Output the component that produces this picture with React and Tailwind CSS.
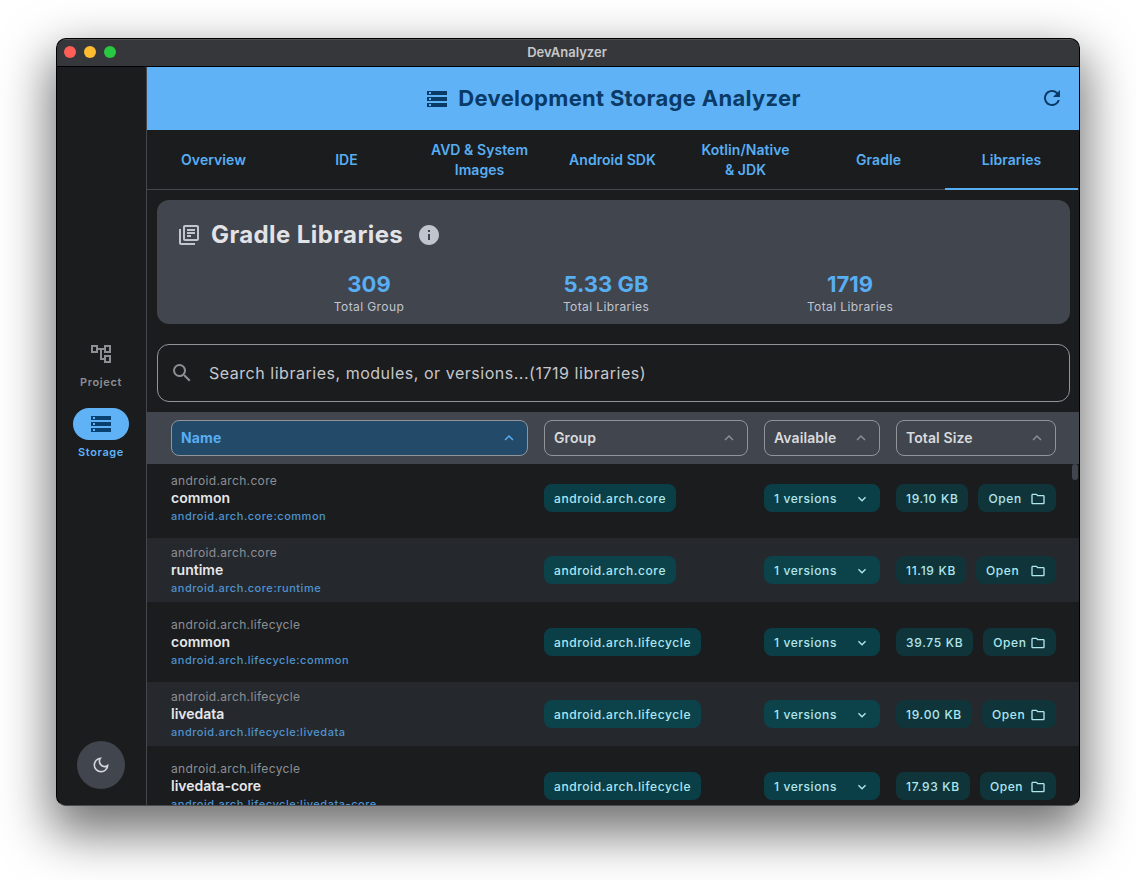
import {
  MdStorage,
  MdOutlineAccountTree,
  MdRefresh,
  MdInfo,
  MdOutlineLibraryBooks,
  MdSearch,
  MdOutlineDarkMode,
  MdOutlineFolder,
  MdKeyboardArrowDown,
  MdKeyboardArrowUp,
} from "react-icons/md";

const tabs = ["Overview", "IDE", "AVD & System Images", "Android SDK", "Kotlin/Native & JDK", "Gradle", "Libraries"];

const stats = [
  { value: "309", label: "Total Group", className: "left-[212px]" },
  { value: "5.33 GB", label: "Total Libraries", className: "left-[449px]" },
  { value: "1719", label: "Total Libraries", className: "left-[693px]" },
];

const rows = [
  { group: "android.arch.core", name: "common", size: "19.10 KB" },
  { group: "android.arch.core", name: "runtime", size: "11.19 KB" },
  { group: "android.arch.lifecycle", name: "common", size: "39.75 KB" },
  { group: "android.arch.lifecycle", name: "livedata", size: "19.00 KB" },
  { group: "android.arch.lifecycle", name: "livedata-core", size: "17.93 KB" },
];

const TitleBar = () => {
  return (
    <div className="relative flex h-[28px] shrink-0 items-center justify-center border-b border-black bg-[#36373b] pr-[2px] shadow-[inset_0_1px_0_rgba(255,255,255,0.14)]">
      <div className="absolute left-[7px] top-[7px] flex gap-2">
        <span className="h-3 w-3 rounded-full bg-[#ff5f57]"></span>
        <span className="h-3 w-3 rounded-full bg-[#febc2e]"></span>
        <span className="h-3 w-3 rounded-full bg-[#28c840]"></span>
      </div>
      <span className="text-[13px] font-semibold text-[#c6c7c9]">DevAnalyzer</span>
    </div>
  );
};

const Sidebar = () => {
  return (
    <div className="flex w-[90px] shrink-0 flex-col items-center border-r border-[#45474c] bg-[#1a1c1e] pr-px">
      <div className="flex flex-1 flex-col items-center justify-center gap-[18px] pb-[11px]">
        <div className="flex flex-col items-center gap-1">
          <div className="flex h-8 w-14 items-center justify-center text-[#8d8f93]">
            <MdOutlineAccountTree className="h-6 w-6" />
          </div>
          <span className="text-[11px] font-semibold leading-4 tracking-[0.6px] text-[#8d8f93]">Project</span>
        </div>
        <div className="flex flex-col items-center gap-1">
          <div className="flex h-8 w-14 items-center justify-center rounded-full bg-[#60b2f7] text-[#0a4070]">
            <MdStorage className="h-6 w-6" />
          </div>
          <span className="text-[11px] font-semibold leading-4 tracking-[0.6px] text-[#60b2f7]">Storage</span>
        </div>
      </div>
      <div className="mb-4 flex h-12 w-12 items-center justify-center rounded-full bg-[#41454d] text-[#d4d6da]">
        <MdOutlineDarkMode className="h-5 w-5" />
      </div>
    </div>
  );
};

const Header = () => {
  return (
    <div className="relative flex h-[63px] shrink-0 items-center justify-center bg-[#60b2f7] text-[#0a3a66]">
      <MdStorage className="mr-[9px] h-6 w-6" />
      <span className="text-[22px] font-bold tracking-[0.3px]">Development Storage Analyzer</span>
      <MdRefresh className="absolute right-[15px] top-[19px] h-6 w-6" />
    </div>
  );
};

const Tabs = () => {
  return (
    <div className="flex h-[60px] shrink-0 border-b border-[#45474c] pr-px">
      {tabs.map((tab) => (
        <div key={tab} className="relative flex flex-1 items-center justify-center px-4 text-center text-sm font-semibold leading-5 tracking-[0.05px] text-[#58aef2]">
          {tab}
          {tab === "Libraries" && <span className="absolute inset-x-0 -bottom-px h-[2px] bg-[#58aef2]"></span>}
        </div>
      ))}
    </div>
  );
};

const SummaryCard = () => {
  return (
    <div className="relative mx-[10px] mt-[10px] h-[124px] w-[913px] shrink-0 rounded-xl bg-[#41454d]">
      <div className="flex items-center pl-[20px] pt-[21px] text-[#e2e3e6]">
        <MdOutlineLibraryBooks className="h-6 w-6 text-[#c2c5cb]" />
        <span className="ml-[10px] text-2xl font-bold leading-7 tracking-[0.4px]">Gradle Libraries</span>
        <MdInfo className="ml-[14px] h-6 w-6 text-[#c0c4ce]" />
      </div>
      {stats.map((s) => (
        <div key={s.value} className={"absolute top-[70px] flex w-0 flex-col items-center whitespace-nowrap " + s.className}>
          <span className="text-[22px] font-bold leading-7 text-[#58aef2]">{s.value}</span>
          <span className="mt-px text-xs leading-4 tracking-[0.4px] text-[#c0c4ce]">{s.label}</span>
        </div>
      ))}
    </div>
  );
};

const SearchBox = () => {
  return (
    <div className="mx-[10px] mt-5 flex h-[58px] w-[913px] shrink-0 items-center rounded-xl border border-[#92949a] pl-[12px]">
      <MdSearch className="h-6 w-6 text-[#8d8f93]" />
      <span className="ml-[15px] text-base tracking-[0.525px] text-[#c6c7cb]">Search libraries, modules, or versions...(1719 libraries)</span>
    </div>
  );
};

const SortButton = ({ label, className, active }) => {
  return (
    <div
      className={
        "flex h-9 items-center justify-between rounded-lg border border-[#92949a] pl-[9px] pr-[9px] text-sm tracking-[0.1px] " +
        className +
        (active ? " bg-[#234a69] font-bold text-[#58aef2]" : " font-semibold text-[#d8dade]")
      }
    >
      <span>{label}</span>
      <MdKeyboardArrowUp className={active ? "h-[18px] w-[18px] text-[#58aef2]" : "h-[18px] w-[18px] text-[#8d9097]"} />
    </div>
  );
};

const TableHeader = () => {
  return (
    <div className="mt-[10px] flex h-[52px] shrink-0 items-center gap-4 bg-[#41454d] pl-6">
      <SortButton label="Name" className="w-[357px]" active />
      <SortButton label="Group" className="w-[204px]" />
      <SortButton label="Available" className="w-[116px]" />
      <SortButton label="Total Size" className="w-[160px]" />
    </div>
  );
};

const Row = ({ group, name, size, index }) => {
  const pill = index % 2 === 1 ? "bg-[#0c434b]" : "bg-[#0b3f47]";
  return (
    <div className={"flex h-16 shrink-0 items-center gap-4 pl-6 " + (index % 2 === 1 ? "bg-[#25282d]" : "")}>
      <div className="flex w-[357px] flex-col">
        <span className="mt-px text-xs leading-[18px] tracking-[0.35px] text-[#8d8f93]">{group}</span>
        <span className="-mt-px text-sm font-semibold leading-[18px] text-[#e6e7e9]">{name}</span>
        <span className="text-[11px] font-medium leading-[18px] tracking-[0.53px] text-[#4f93cf]">
          {group}:{name}
        </span>
      </div>
      <div className="w-[204px]">
        <span className={"inline-flex h-7 items-center rounded-lg px-[10px] pt-[2px] text-xs font-medium tracking-[0.6px] text-[#b0e6ee] " + pill}>{group}</span>
      </div>
      <div className={"flex h-7 w-[116px] items-center justify-between rounded-lg px-[10px] pt-[2px] text-xs font-medium tracking-[0.6px] text-[#b0e6ee] " + pill}>
        1 versions
        <MdKeyboardArrowDown className="h-4 w-4" />
      </div>
      <div className="flex w-[160px] items-center justify-between gap-[10px]">
        <span className="inline-flex h-7 items-center rounded-lg bg-[#0f353a] px-[10px] pt-[2px] text-xs font-medium tracking-[0.7px] text-[#b0e6ee]">{size}</span>
        <span className="inline-flex h-7 flex-1 items-center justify-between rounded-lg bg-[#0f353a] px-[10px] pt-[2px] text-xs font-medium tracking-[0.6px] text-[#b0e6ee]">
          Open
          <MdOutlineFolder className="h-4 w-4" />
        </span>
      </div>
    </div>
  );
};

const App = () => {
  return (
    <div className="h-[880px] w-[1136px] overflow-hidden bg-white pl-[56px] pt-[38px] font-['Inter',sans-serif]">
      <div className="flex h-[768px] w-[1024px] flex-col overflow-hidden rounded-[10px] border border-black border-b-[#4a4b4e] bg-[#1a1c1e] shadow-[0_22px_50px_6px_rgba(0,0,0,0.55)]">
        <TitleBar />
        <div className="flex min-h-0 flex-1">
          <Sidebar />
          <div className="flex min-w-0 flex-1 flex-col">
            <Header />
            <Tabs />
            <SummaryCard />
            <SearchBox />
            <TableHeader />
            <div className="relative flex min-h-0 flex-1 flex-col gap-2 overflow-hidden pt-[2px]">
              {rows.map((r, i) => (
                <Row key={r.group + r.name} {...r} index={i} />
              ))}
              <span className="absolute right-[1px] top-0 h-4 w-[6px] rounded-full bg-[#41454d]"></span>
            </div>
          </div>
        </div>
      </div>
    </div>
  );
};

export default App;
